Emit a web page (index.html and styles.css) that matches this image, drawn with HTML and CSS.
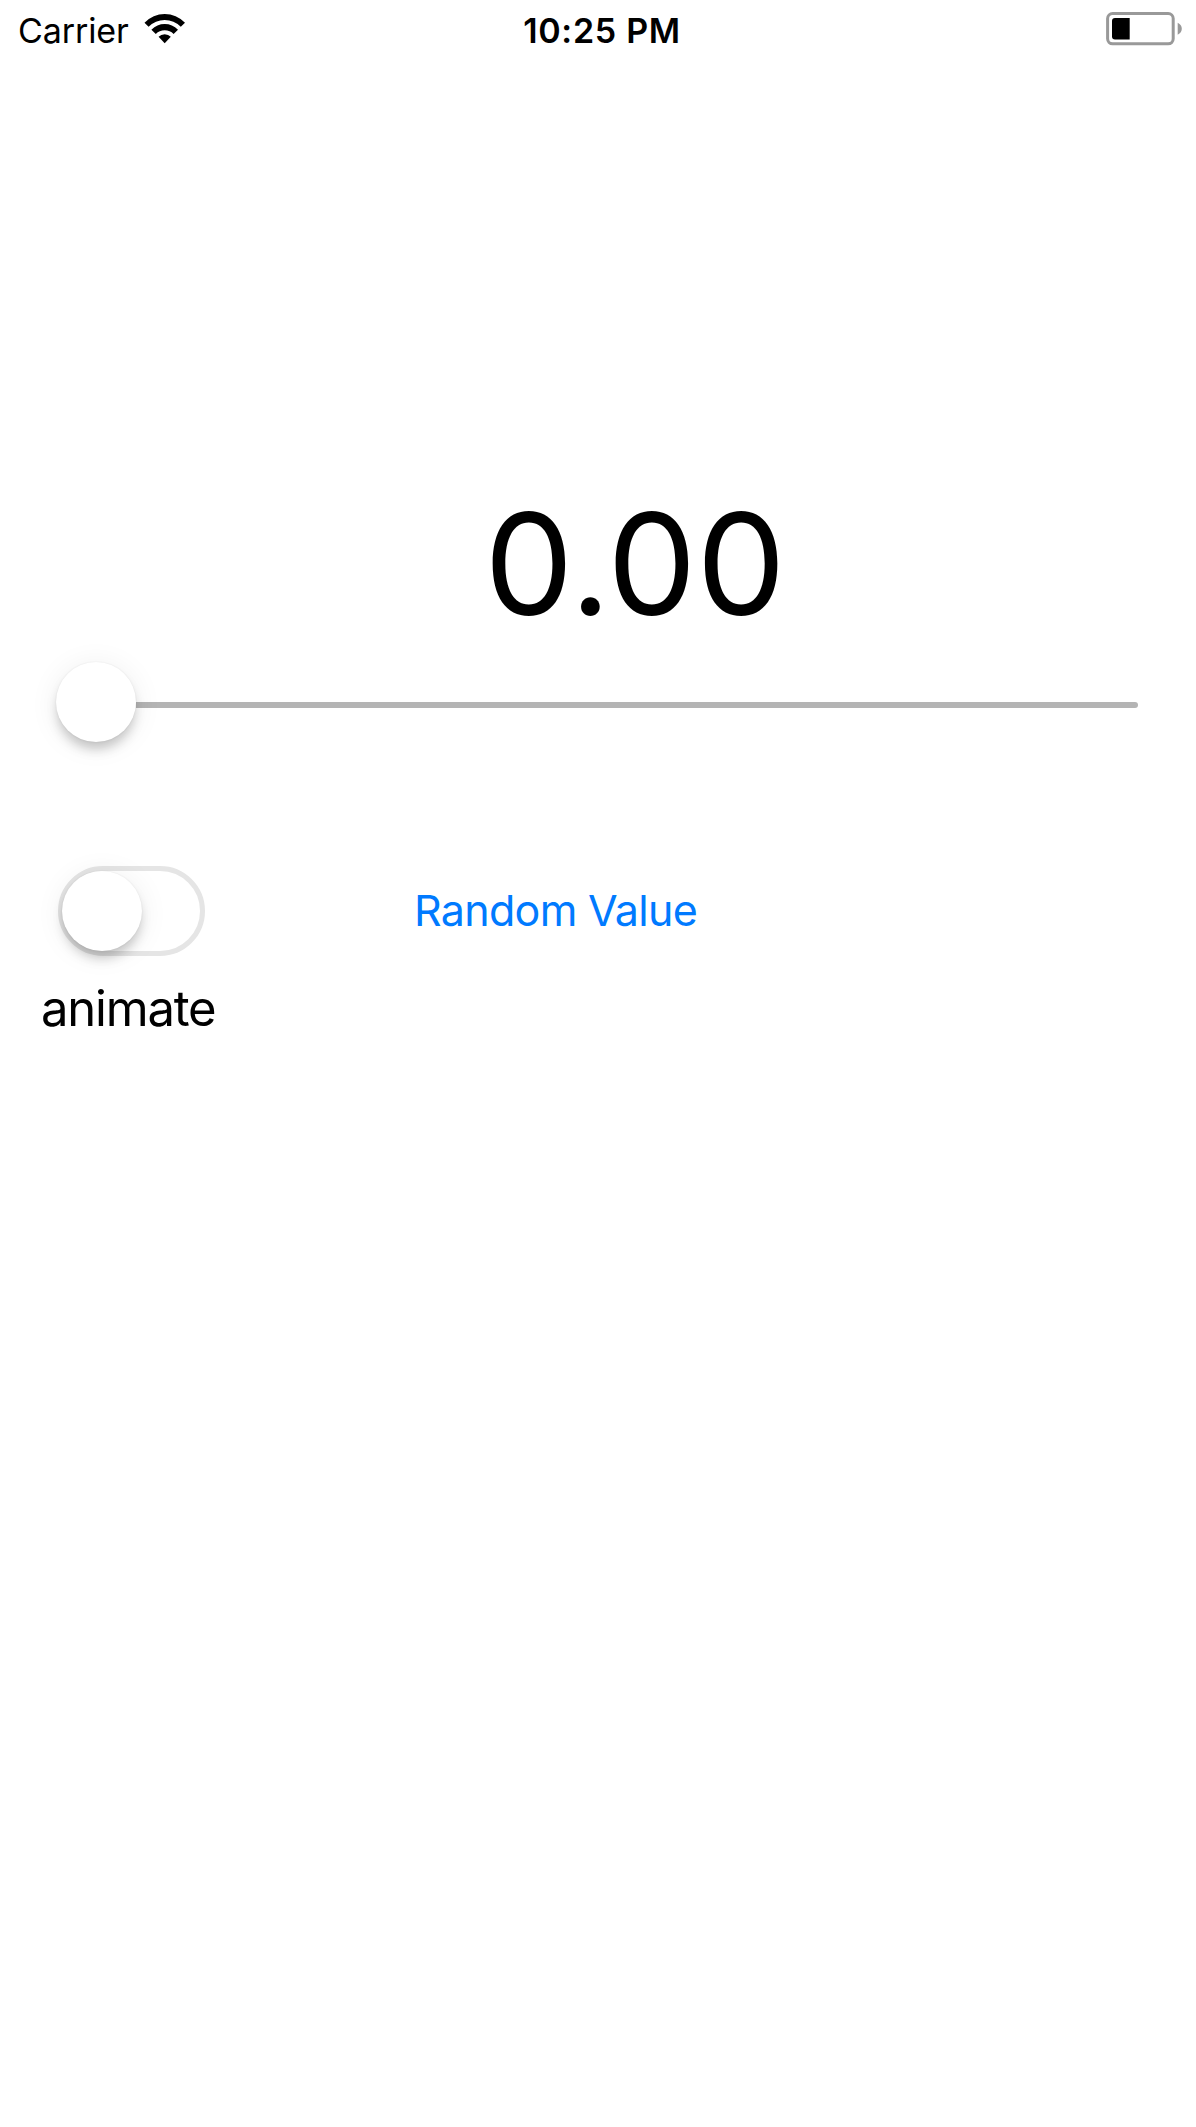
FILE: index.html
```html
<!DOCTYPE html>
<html lang="en">
<head>
<meta charset="utf-8">
<title>Animated Value</title>
<link rel="stylesheet" href="styles.css">
</head>
<body>
<header class="status-bar">
  <div class="carrier">
    <span class="carrier-name">Carrier</span>
    <svg class="wifi" viewBox="0 0 42 32" width="42" height="32">
      <path d="M0.5 9.8Q9 1 20.7 1T41 9.8L36.8 13.8Q30 7 20.7 7T4.6 13.8Z"/>
      <path d="M7.4 16.8Q13 11 20.7 11T34 16.8L29.6 21Q26 17.3 20.7 17.3T11.8 21Z"/>
      <path d="M14.6 23.7Q17 21.2 20.7 21.2T26.8 23.7L20.7 30.2Z"/>
    </svg>
  </div>
  <span class="time">10:25 PM</span>
  <svg class="battery" viewBox="0 0 76 34" width="76" height="34">
    <rect x="1.6" y="1.5" width="65.6" height="30.3" rx="5" fill="none" stroke="#999" stroke-width="3"/>
    <path d="M9 6H23.7V27.5H9Q6 27.5 6 24.5V9Q6 6 9 6Z"/>
    <path d="M71.7 10.8Q75.8 13 75.8 16.8T71.7 22.8Z" fill="#999"/>
  </svg>
</header>
<main class="content">
  <output class="value">0.00</output>
  <div class="slider"><div class="track"></div><div class="thumb"></div></div>
  <div class="controls">
    <div class="switch"><div class="thumb"></div></div>
    <button class="random" type="button">Random Value</button>
  </div>
  <span class="label">animate</span>
</main>
</body>
</html>
```
FILE: styles.css
```css
* { box-sizing: border-box; }

body {
  margin: 0;
  min-height: 2127px;
  background: #fff;
  color: #000;
  font-family: Inter, "Liberation Sans", sans-serif;
}

.status-bar {
  display: grid;
  grid-template-columns: 1fr auto 1fr;
  height: 60px;
  padding: 0 14px 0 18px;
  font-size: 34px;
  line-height: 62px;
}

.carrier {
  display: flex;
  gap: 15px;
}

.carrier-name { letter-spacing: -0.1px; }
.wifi { margin-top: 13px; }

.time {
  margin: 0 -2px 0 2px;
  font-weight: 560;
  letter-spacing: 0.7px;
}

.battery {
  justify-self: end;
  margin-top: 12px;
}

.content {
  display: flex;
  flex-direction: column;
  align-items: flex-start;
  padding: 417px 58px 0;
}

.value {
  align-self: center;
  margin-left: 74px;
  font-size: 141.5px;
  line-height: 174px;
}

.slider {
  display: flex;
  align-items: center;
  align-self: stretch;
  height: 80px;
  margin: 11px 0 0 -2px;
}

.track {
  flex: 1;
  height: 6px;
  margin-top: 6px;
  border-radius: 0 3px 3px 0;
  background: #b4b4b4;
}

.thumb {
  width: 80px;
  height: 80px;
  border-radius: 50%;
  background: #fff;
  box-shadow: 0 0 2px rgba(0, 0, 0, .08), 0 9px 12px -2px rgba(0, 0, 0, .21), 0 3px 30px rgba(0, 0, 0, .07);
}

.slider .thumb {
  order: -1;
  position: relative;
  z-index: 1;
}

.controls {
  display: flex;
  align-items: flex-start;
  margin-top: 124px;
}

.switch {
  width: 147px;
  height: 90px;
  border: 5px solid #e5e5e5;
  border-radius: 45px;
}

.switch .thumb { margin-left: -1px; }

.random {
  margin: 14px 0 0 209px;
  padding: 0;
  border: 0;
  background: none;
  color: #007aff;
  font: 43px/60px Inter, sans-serif;
  letter-spacing: -0.7px;
  white-space: nowrap;
}

.label {
  margin: 23px 0 0 -17px;
  font-size: 49px;
  line-height: 60px;
  letter-spacing: -1.2px;
}
```
